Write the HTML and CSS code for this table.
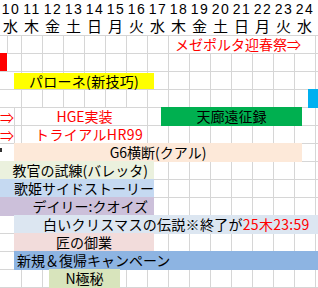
FILE: index.html
```html
<!DOCTYPE html>
<html lang="ja">
<head>
<meta charset="utf-8">
<title>スケジュール</title>
<link rel="stylesheet" href="styles.css">
</head>
<body>
<div class="sheet">
  <div class="head">
    <div class="day"><span class="num">10</span><span class="wd">水</span></div>
    <div class="day"><span class="num">11</span><span class="wd">木</span></div>
    <div class="day"><span class="num">12</span><span class="wd">金</span></div>
    <div class="day"><span class="num">13</span><span class="wd">土</span></div>
    <div class="day"><span class="num">14</span><span class="wd">日</span></div>
    <div class="day"><span class="num">15</span><span class="wd">月</span></div>
    <div class="day"><span class="num">16</span><span class="wd">火</span></div>
    <div class="day"><span class="num">17</span><span class="wd">水</span></div>
    <div class="day"><span class="num">18</span><span class="wd">木</span></div>
    <div class="day"><span class="num">19</span><span class="wd">金</span></div>
    <div class="day"><span class="num">20</span><span class="wd">土</span></div>
    <div class="day"><span class="num">21</span><span class="wd">日</span></div>
    <div class="day"><span class="num">22</span><span class="wd">月</span></div>
    <div class="day"><span class="num">23</span><span class="wd">火</span></div>
    <div class="day"><span class="num">24</span><span class="wd">水</span></div>
  </div>
  <div class="grid">
    <div class="tick tick-r1"></div>
    <div class="note red evt-meze">メゼポルタ迎春祭⇒</div>

    <div class="mark-red"></div>

    <div class="bar bar-yellow">パローネ(新技巧)</div>

    <div class="mark-blue"></div>

    <div class="arrow red arrow-r5">⇒</div>
    <div class="tick tick-r56"></div>
    <div class="note red evt-hge">HGE実装</div>
    <div class="bar bar-green">天廊遠征録</div>

    <div class="arrow red arrow-r6">⇒</div>
    <div class="note red evt-trial">トライアルHR99</div>

    <div class="nub"></div>
    <div class="bar bar-peach">G6横断(クアル)</div>

    <div class="bar bar-olive">教官の試練(バレッタ)</div>
    <div class="bar bar-sky">歌姫サイドストーリー</div>
    <div class="bar bar-lilac">デイリー:クオイズ</div>
    <div class="bar bar-ice">白いクリスマスの伝説※終了が<span class="red">25木23:59</span></div>
    <div class="bar bar-rose">匠の御業</div>
    <div class="bar bar-blue">新規＆復帰キャンペーン</div>
    <div class="bar bar-sage">N極秘</div>
  </div>
</div>
</body>
</html>
```

FILE: styles.css
```css
html, body {
  margin: 0;
  padding: 0;
  background: #ffffff;
}

body {
  width: 318px;
  height: 288px;
  overflow: hidden;
  font-family: "Noto Sans CJK JP", "Noto Sans", sans-serif;
  color: #000000;
}

.sheet {
  width: 318px;
}

.head {
  display: grid;
  grid-template-columns: repeat(15, 21px);
  height: 35px;
}

.day {
  display: flex;
  flex-direction: column;
  align-items: center;
}

.num {
  height: 17px;
  font-family: "Liberation Sans", "DejaVu Sans", sans-serif;
  font-size: 14px;
  line-height: 18px;
  letter-spacing: 1.5px;
  padding-left: 1px;
}

.wd {
  height: 18px;
  font-size: 15px;
  line-height: 18px;
  padding-top: 0;
}

.grid {
  display: grid;
  grid-template-columns: repeat(45, 7px) 1fr;
  grid-template-rows: repeat(14, 18px);
  height: 253px;
  font-size: 14px;
  white-space: nowrap;
  background-image:
    repeating-linear-gradient(90deg, transparent 0 20px, #d6d6d6 20px 21px),
    repeating-linear-gradient(180deg, #d6d6d6 0 1px, transparent 1px 18px);
  background-position: 1px 0, 0 0;
  background-size: 100% 100%, 100% 100%;
  background-repeat: no-repeat, no-repeat;
}

.red {
  color: #ff0000;
}

.tick {
  border-left: 1px solid #d6d6d6;
}

.tick-r1 {
  grid-row: 1;
  grid-column: 2 / 3;
}

.tick-r56 {
  grid-row: 5 / 7;
  grid-column: 3 / 4;
}

.note {
  background: #ffffff;
  margin: 1px 0 0 1px;
  line-height: 17px;
  overflow: visible;
}

.evt-meze {
  grid-row: 1;
  grid-column: 25 / 46;
  padding-left: 6px;
}

.evt-hge {
  grid-row: 5;
  grid-column: 4 / 22;
  text-align: center;
}

.evt-trial {
  grid-row: 6;
  grid-column: 4 / 22;
  padding-left: 13px;
  letter-spacing: 0.4px;
}

.arrow {
  grid-column: 1 / 3;
  line-height: 18px;
  margin-top: 1px;
}

.arrow-r5 { grid-row: 5; }
.arrow-r6 { grid-row: 6; }

.mark-red {
  grid-row: 2;
  grid-column: 1 / 2;
  background: #ff0000;
}

.mark-blue {
  grid-row: 4;
  grid-column: 45 / -1;
  background: #00b0f0;
  margin-bottom: -1px;
}

.nub {
  grid-row: 7;
  grid-column: 1 / 2;
  align-self: start;
  width: 2px;
  height: 4px;
  margin-top: 5px;
  background: #333333;
}

.bar {
  line-height: 19px;
  margin-bottom: -1px;
  text-align: center;
}

.bar-yellow {
  grid-row: 3;
  grid-column: 3 / 23;
  margin-top: 2px;
  margin-bottom: 0;
  line-height: 16px;
  background: #ffff00;
  letter-spacing: 0.3px;
}

.bar-green {
  grid-row: 5;
  grid-column: 24 / 44;
  margin-right: -1px;
  background: #00b050;
}

.bar-peach {
  grid-row: 7;
  grid-column: 3 / 44;
  margin-right: -1px;
  background: #fde9d9;
}

.bar-olive {
  grid-row: 8;
  grid-column: 1 / 23;
  background: #ebf1de;
  text-align: right;
  padding-right: 6px;
}

.bar-sky {
  grid-row: 9;
  grid-column: 1 / 23;
  background: #c5d9f1;
  text-align: right;
}

.bar-lilac {
  grid-row: 10;
  grid-column: 1 / 23;
  background: #ccc0da;
  text-align: right;
  padding-right: 6px;
}

.bar-ice {
  grid-row: 11;
  grid-column: 3 / -1;
  background: #dce6f1;
  text-align: left;
  padding-left: 29px;
  letter-spacing: 0.3px;
}

.bar-rose {
  grid-row: 12;
  grid-column: 3 / 23;
  background: #f2dcdb;
}

.bar-blue {
  grid-row: 13;
  grid-column: 3 / -1;
  background: #8db4e2;
  text-align: left;
  padding-left: 3px;
}

.bar-sage {
  grid-row: 14;
  grid-column: 8 / 18;
  margin-right: -1px;
  background: #d8e4bc;
}
```
